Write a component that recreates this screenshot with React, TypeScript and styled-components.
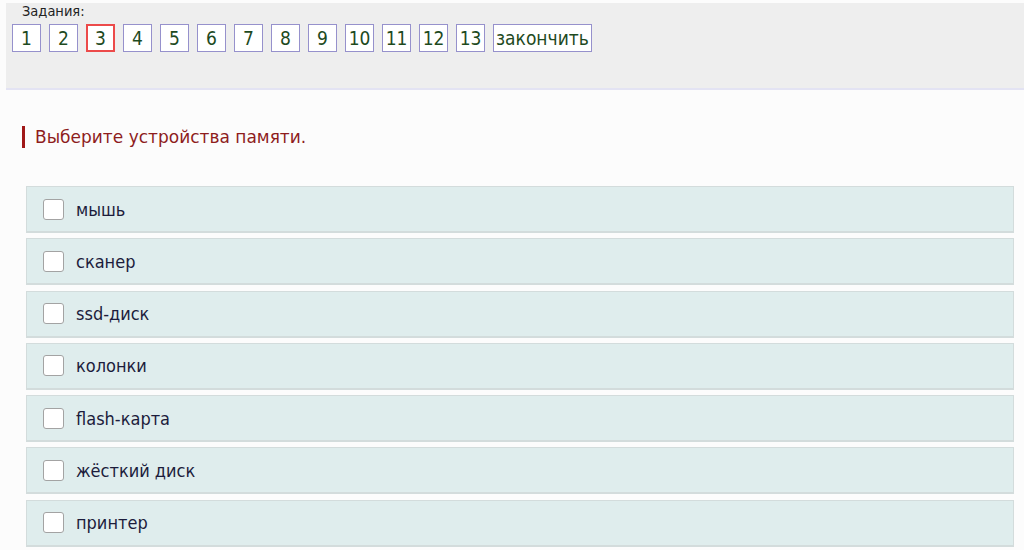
import React from 'react'
import styled, { createGlobalStyle } from 'styled-components'

const GlobalStyle = createGlobalStyle`
  body {
    margin: 0;
    background: #fcfcfc;
    font-family: 'DejaVu Sans', Verdana, sans-serif;
  }
`

const tasks = ['1', '2', '3', '4', '5', '6', '7', '8', '9', '10', '11', '12', '13']
const answers = ['мышь', 'сканер', 'ssd-диск', 'колонки', 'flash-карта', 'жёсткий диск', 'принтер']

export default function App(): React.ReactElement {
  return (
    <>
      <GlobalStyle />
      <Page>
        <TaskBar>
          <BarLabel>Задания:</BarLabel>
          <TaskRow>
            {tasks.map((t) => (
              <TaskButton key={t} $active={t === '3'}>
                {t}
              </TaskButton>
            ))}
            <TaskButton>закончить</TaskButton>
          </TaskRow>
        </TaskBar>
        <Question>Выберите устройства памяти.</Question>
        <AnswerList>
          {answers.map((a) => (
            <AnswerRow key={a}>
              <Check type="checkbox" />
              <AnswerText>{a}</AnswerText>
            </AnswerRow>
          ))}
        </AnswerList>
      </Page>
    </>
  )
}

const Page = styled.div`
  display: flex;
  flex-direction: column;
  padding-top: 3px;
`

const TaskBar = styled.div`
  margin-left: 6px;
  height: 87px;
  box-sizing: border-box;
  padding: 0 0 0 6px;
  background: #eeeeee;
  border-bottom: 2px solid #e3e3f3;
`

const BarLabel = styled.div`
  margin-left: 10px;
  font-family: 'DejaVu Sans Condensed', 'DejaVu Sans', sans-serif;
  font-size: 14.5px;
  line-height: 17px;
  color: #222;
`

const TaskRow = styled.div`
  display: flex;
  gap: 8px;
  margin-top: 4px;
`

const TaskButton = styled.div<{ $active?: boolean }>`
  min-width: 29px;
  height: 28px;
  box-sizing: border-box;
  padding: 0 2px;
  display: flex;
  align-items: center;
  justify-content: center;
  background: #fff;
  border: 1px solid ${(p) => (p.$active ? '#ec4a4a' : '#9691cc')};
  border-width: ${(p) => (p.$active ? '2px' : '1px')};
  font-family: 'DejaVu Sans Condensed', 'DejaVu Sans', sans-serif;
  font-size: 19px;
  color: #1e4a1e;
`

const Question = styled.div`
  margin: 36px 0 0 22px;
  padding-left: 10px;
  border-left: 3px solid #a01818;
  font-size: 17px;
  line-height: 22px;
  color: #8e1d1d;
  font-family: 'DejaVu Sans', sans-serif;
`

const AnswerList = styled.div`
  display: flex;
  flex-direction: column;
  gap: 5.3px;
  margin: 38px 10px 0 26px;
`

const AnswerRow = styled.label`
  display: flex;
  align-items: center;
  height: 47px;
  box-sizing: border-box;
  padding-left: 16px;
  background: #dfeded;
  border: 1px solid #d3dcdc;
  border-bottom-width: 2px;
`

const Check = styled.input`
  appearance: none;
  width: 21px;
  height: 21px;
  margin: 0 12px 0 0;
  background: #fff;
  border: 1px solid #a3a3a3;
  border-radius: 3px;
`

const AnswerText = styled.span`
  font-family: 'DejaVu Sans Condensed', 'DejaVu Sans', sans-serif;
  font-size: 18px;
  color: #1c1c3c;
`
